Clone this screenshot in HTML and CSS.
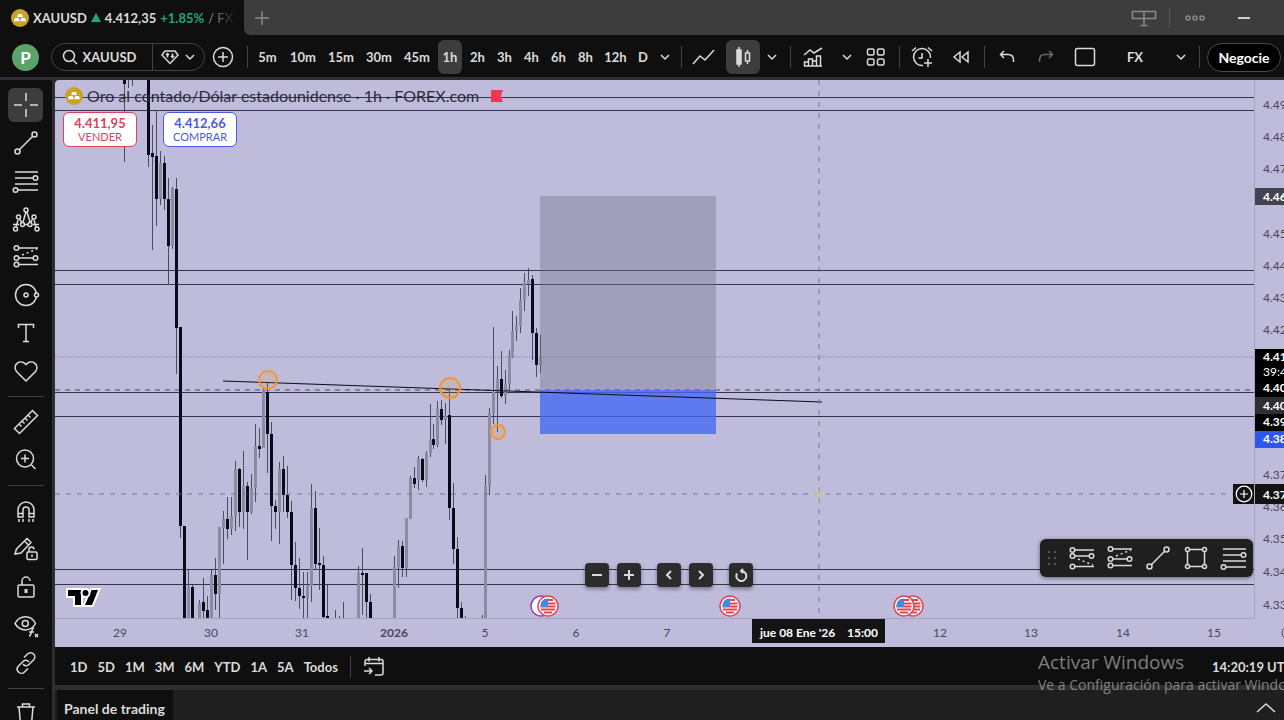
FILE: index.html
```
<!DOCTYPE html>
<html lang="es">
<head>
  <meta charset="UTF-8" />
  <meta name="viewport" content="width=device-width, initial-scale=1.0"/>
  <title>XAUUSD 4.412,35 +1.85% / FX</title>
  <link rel="stylesheet" href="styles.css">
</head>
<body>

<!-- shared icons -->
<svg class="sprite" aria-hidden="true">
  <symbol id="gold" viewBox="0 0 20 20">
    <circle cx="10" cy="10" r="10" fill="#c9a227"/>
    <path d="M8 5.500h4l1.300 3.500H6.700z M4.500 10h4l1.300 3.500H3.200z M11.500 10h4l1.300 3.500h-6.600z" fill="#fff"/>
  </symbol>
  <symbol id="chevron" viewBox="0 0 12 12"><path d="M2 4l4 4 4-4"/></symbol>
  <symbol id="plus-circle" viewBox="0 0 22 22"><circle cx="11" cy="11" r="9.500"/><path d="M11 6v10M6 11h10"/></symbol>
  <symbol id="trend" viewBox="0 0 28 28"><circle cx="5.500" cy="22.500" r="2.500"/><circle cx="22.500" cy="5.500" r="2.500"/><path d="M7.300 20.700L20.700 7.300"/></symbol>
  <symbol id="fib" viewBox="0 0 28 28"><path d="M3 5h23M3 11h18M3 17h23M5.500 23H26"/><circle cx="23.500" cy="11" r="2.300"/><circle cx="3.500" cy="23" r="2.300"/></symbol>
  <symbol id="short" viewBox="0 0 28 28"><circle cx="4.500" cy="5" r="2.300"/><path d="M7 5h19"/><circle cx="4.500" cy="15" r="2.300"/><path d="M7 15h14"/><circle cx="23.500" cy="15" r="2.300"/><circle cx="4.500" cy="21.500" r="2.300"/><path d="M7 21.500h19"/><path d="M10 12l15-6" stroke-dasharray="2 3"/></symbol>
  <symbol id="long" viewBox="0 0 28 28"><circle cx="4.500" cy="6" r="2.300"/><path d="M7 6h19"/><circle cx="4.500" cy="12" r="2.300"/><path d="M7 12h14"/><circle cx="23.500" cy="12" r="2.300"/><circle cx="4.500" cy="22.500" r="2.300"/><path d="M7 22.500h19"/><path d="M10 15l15 6" stroke-dasharray="2 3"/></symbol>
  <symbol id="flag" viewBox="0 0 22 22">
    <circle cx="11" cy="11" r="10" fill="#fff" stroke="#e0455a" stroke-width="1.500"/>
    <path d="M4 8.500h14.500M3.500 11.500h15M4 14.500h14M7 17.500h8M7 5h9" stroke="#e8414f" stroke-width="1.800"/>
    <path d="M11 3.500V12H3.500C3 7 6 3.500 11 3.500z" fill="#3f8be0"/>
  </symbol>
</svg>

<div class="app">

  <header class="tabs">
    <div class="tab">
      <svg class="coin"><use href="#gold"/></svg>
      <b>XAUUSD</b>
      <i class="up"></i>
      <b>4.412,35</b>
      <b class="green">+1.85%</b>
      <span class="fade">/ FX</span>
    </div>
    <div class="tabs-rest">
      <button class="new-tab" aria-label="Nueva pestaña"><svg class="ico" width="16" height="16" viewBox="0 0 16 16"><path d="M8 1v14M1 8h14"/></svg></button>
      <div class="window-buttons">
        <button aria-label="Vincular"><svg class="ico" width="26" height="20" viewBox="0 0 26 20"><path d="M1.500 3.500h23v7h-23zM13 3.500V17M9.500 17.500h7"/></svg></button>
        <span class="sep"></span>
        <button aria-label="Menú"><svg class="ico" width="22" height="8" viewBox="0 0 22 8"><circle cx="4" cy="4" r="2"/><circle cx="11" cy="4" r="2"/><circle cx="18" cy="4" r="2"/></svg></button>
        <button class="minimize" aria-label="Minimizar"><svg class="ico" width="12" height="4" viewBox="0 0 12 4"><path d="M0 2h12"/></svg></button>
      </div>
    </div>
  </header>

  <nav class="toolbar">
    <button class="avatar">P</button>
    <div class="search">
      <button class="symbol">
        <svg class="ico" width="16" height="16" viewBox="0 0 16 16"><circle cx="7" cy="7" r="5.500"/><path d="M11 11l4 4"/></svg>
        XAUUSD
      </button>
      <button class="compare" aria-label="Fuente">
        <svg class="ico" width="18" height="16" viewBox="0 0 18 16"><path d="M4 2h10l3 4-8 8.500L1 6z"/><path d="M6.500 4.500v4M5 6l1.500-1.500L8 6M11.500 4.500v4M10 7l1.500 1.500L13 7"/></svg>
        <svg class="ico chev"><use href="#chevron"/></svg>
      </button>
    </div>
    <button class="tool add" aria-label="Comparar"><svg class="ico" width="22" height="22"><use href="#plus-circle"/></svg></button>
    <span class="sep"></span>
    <div class="intervals">
      <button class="mid">5m</button>
      <button class="wide">10m</button>
      <button class="wide">15m</button>
      <button class="wide">30m</button>
      <button class="wide">45m</button>
      <button class="on">1h</button>
      <button>2h</button>
      <button>3h</button>
      <button>4h</button>
      <button>6h</button>
      <button>8h</button>
      <button class="mid">12h</button>
      <button class="slim">D</button>
      <button class="slim" aria-label="Más intervalos"><svg class="ico chev"><use href="#chevron"/></svg></button>
    </div>
    <span class="sep"></span>
    <button class="tool wide" aria-label="Línea"><svg class="ico" width="24" height="18" viewBox="0 0 24 18"><path d="M1 16l7-8 5 4 9-10"/></svg></button>
    <button class="tool on" aria-label="Velas"><svg class="ico" width="18" height="22" viewBox="0 0 18 22"><path d="M5 1v20M13.500 4v3M13.500 15v3"/><path d="M3 4h4v14H3z" fill="currentColor"/><path d="M11.500 7h4v8h-4z"/></svg></button>
    <button class="tool slim" aria-label="Más tipos"><svg class="ico chev"><use href="#chevron"/></svg></button>
    <span class="sep"></span>
    <button class="tool wide" aria-label="Indicadores"><svg class="ico" width="20" height="20" viewBox="0 0 20 20"><path d="M1 8l6-5 4 3 8-5M1.500 19v-4h4v4M5.500 19v-7h4v7M9.500 19v-5h4v5M13.500 19V9h4v10zM1 19h18"/></svg></button>
    <button class="tool slim" aria-label="Plantillas"><svg class="ico chev"><use href="#chevron"/></svg></button>
    <button class="tool" aria-label="Diseños"><svg class="ico" width="20" height="20" viewBox="0 0 20 20"><rect x="1.500" y="2" width="6.500" height="6" rx="1.500"/><rect x="11.500" y="2" width="6.500" height="6" rx="1.500"/><rect x="1.500" y="12" width="6.500" height="6" rx="1.500"/><rect x="11.500" y="12" width="6.500" height="6" rx="1.500"/></svg></button>
    <span class="sep"></span>
    <button class="tool wide" aria-label="Alerta"><svg class="ico" width="22" height="22" viewBox="0 0 22 22"><path d="M19.500 12A8.500 8.500 0 1 0 12 19.500M11 7v5H7.500M1 5l4-3.500M17 1.500L21 5M17 13v8M13 17h8"/></svg></button>
    <button class="tool" aria-label="Repetición"><svg class="ico" width="18" height="14" viewBox="0 0 18 14"><path d="M8 2v10L2 7zM16 2v10l-6-5z"/></svg></button>
    <span class="sep"></span>
    <button class="tool wide" aria-label="Deshacer"><svg class="ico" width="16" height="14" viewBox="0 0 16 14"><path d="M5 1L1.500 4.500 5 8M1.500 4.500H9c3.500 0 5.500 2 5.500 5.500v2"/></svg></button>
    <button class="tool dim" aria-label="Rehacer"><svg class="ico" width="16" height="14" viewBox="0 0 16 14"><path d="M11 1l3.500 3.500L11 8M14.500 4.500H7C3.500 4.500 1.500 6.500 1.500 10v2"/></svg></button>
    <button class="tool wide" aria-label="Disposición"><svg class="ico" width="22" height="20" viewBox="0 0 22 20"><rect x="1.500" y="1.500" width="19" height="17" rx="2"/></svg></button>
    <button class="layout-name">FX <svg class="ico chev"><use href="#chevron"/></svg></button>
    <span class="sep"></span>
    <button class="trade">Negocie</button>
  </nav>

  <div class="workspace">
    <aside class="drawing">
      <button class="on" aria-label="Cruz"><svg class="ico" viewBox="0 0 28 28"><path d="M14 2v8M14 18v8M2 14h8M18 14h8"/></svg></button>
      <button aria-label="Línea de tendencia"><svg class="ico"><use href="#trend"/></svg></button>
      <button aria-label="Fibonacci"><svg class="ico"><use href="#fib"/></svg></button>
      <button aria-label="Patrones"><svg class="ico" viewBox="0 0 28 28"><path d="M1 19.500h6M12 19.500h4M21 19.500h6M4 22l2-7M7.500 14l2.500 4M11 17l3-10M15 7l3 10M18.500 18l2-4M22 15l2 7"/><circle cx="3.500" cy="24" r="2"/><circle cx="6.500" cy="12" r="2"/><circle cx="10.500" cy="19.500" r="2"/><circle cx="14" cy="5" r="2"/><circle cx="18" cy="19.500" r="2"/><circle cx="22" cy="12" r="2"/><circle cx="25" cy="24" r="2"/></svg></button>
      <button aria-label="Posición"><svg class="ico"><use href="#short"/></svg></button>
      <button aria-label="Formas"><svg class="ico" viewBox="0 0 28 28"><circle cx="14" cy="14" r="10.500"/><circle cx="14" cy="14" r="2"/><circle cx="24.500" cy="14" r="2" fill="#0f0f0f"/></svg></button>
      <button aria-label="Texto"><svg class="ico" viewBox="0 0 28 28"><path d="M6.500 9V5.500h15V9M14 5.500v17M11 22.500h6"/></svg></button>
      <button aria-label="Favoritos"><svg class="ico" viewBox="0 0 28 28"><path d="M14 24L4.500 14.500c-5-6.500 4-13.500 9.500-7 5.500-6.500 14.500.5 9.500 7z"/></svg></button>
      <hr>
      <button aria-label="Regla"><svg class="ico" viewBox="0 0 28 28"><path d="M2.500 20.500L20.500 2.500l5 5-18 18zM7 16l2.500 2.500M10 13l2.500 2.500M13 10l2.500 2.500M16 7l2.500 2.500"/></svg></button>
      <button aria-label="Acercar"><svg class="ico" viewBox="0 0 28 28"><circle cx="13" cy="12.500" r="8.500"/><path d="M19.500 19l4 4M13 8.500v8M9 12.500h8"/></svg></button>
      <hr>
      <button aria-label="Imán"><svg class="ico" viewBox="0 0 28 28"><path d="M6 20v-7a8 8 0 0 1 16 0v7h-5v-7a3 3 0 0 0-6 0v7zM6 16.500h5M17 16.500h5M7 22v3M11 22v3M17 22v3M21 22v3"/></svg></button>
      <button aria-label="Seguir dibujando"><svg class="ico" viewBox="0 0 28 28"><path d="M3 19l1.500-5L15 3.500l4 4L9 18zM12.500 6l4 4M17 17v-2.500a2.500 2.500 0 0 1 5 0"/><rect x="15" y="17" width="10" height="7.500" rx="1"/><path d="M20 19.500v2.500"/></svg></button>
      <button aria-label="Bloquear"><svg class="ico" viewBox="0 0 28 28"><rect x="6" y="12" width="16" height="12" rx="1.500"/><path d="M10 12V8a4 4 0 0 1 8 0"/><path d="M14 16v4" class="heavy"/></svg></button>
      <button aria-label="Ocultar"><svg class="ico" viewBox="0 0 28 28"><path d="M3 12.500C8 3.500 19 3.500 23.500 12.500 19 21 8 21 3 12.500z"/><circle cx="13.300" cy="12.500" r="3"/><path d="M22 17c-3 0-2 8-5 8M17 21h5M23 23l3 3M26 23l-3 3"/></svg></button>
      <button aria-label="Vínculo"><svg class="ico" viewBox="0 0 28 28"><path d="M12 8.500l3.500-3.500c4-4 10 2 6 6L17 15.500c-2 2-4.500 1.500-6-.5M16 19.500L12.500 23c-4 4-10-2-6-6L11 12.500c2-2 4.500-1.500 6 .5"/></svg></button>
      <hr>
      <button aria-label="Eliminar"><svg class="ico" viewBox="0 0 28 28"><path d="M5 7h18M10.500 7V4h7v3M7 7l1.500 17h11L21 7"/></svg></button>
    </aside>

    <main class="main">
      <section class="chart">
        <div class="plot">
          <svg class="canvas" width="100%" height="100%">
            <g class="levels">
              <path d="M0 17h3000M0 30h3000M0 190h3000M0 204h3000M0 312h3000M0 336h3000M0 489h3000M0 504h3000"/>
            </g>
            <line class="last-price" x1="0" y1="277" x2="100%" y2="277"/>
            <line class="alert-line" x1="0" y1="310" x2="100%" y2="310"/>

            <!-- candles -->
            <g class="candles" transform="translate(-55 -80)">
              <path class="wick" d="M124 80V162M128 80V88M132 80V86M148 80V167M152 125V250M156 110V226M160 151V205M164 156V210M168 178V285M172 187V249M176 178V374M180 327V538M188 569V619M192 585V619M199 600V619M203 578V619M207 596V619M211 570V619M215 558V610M219 527V619M223 511V564M227 497V539M231 497V535M235 461V531M239 468V527M243 451V529M247 482V560M251 474V514M255 424V502M259 428V458M263 388V448M267 382V473M271 422V541M275 500V529M279 462V544M283 456V512M287 466V518M291 501V600M295 542V601M299 558V609M303 572V619M307 572V619M311 484V602M315 491V570M319 528V590M323 556V619M327 585V619M335 610V619M339 616V619M343 602V619M358 566V619M362 548V615M366 573V619M370 594V619M394 556V619M398 540V588M402 541V577M406 518V577M410 476V519M414 467V488M418 456V490M422 458V482M426 451V487M430 404V457M433 424V449M437 401V447M441 400V425M445 403V444M449 389V520M453 483V564M457 537V619M461 602V619M465 616V619M482 615V619M485 475V619M489 408V495M493 327V424M497 366V432M501 351V398M505 370V404M509 350V390M512 311V358M516 316V341M520 288V333M524 273V311M528 268V296M532 275V360M536 328V377M540 335V373"/>
              <path class="bull" d="M160 163V199M172 188V246M188 587V619M199 603V619M211 575V619M219 527V594M223 519V528M231 516V529M235 469V516M243 486V512M251 488V512M255 446V488M263 390V448M279 469V512M307 586V597M311 508V586M358 573V619M394 567V619M398 546V567M406 518V568M410 478V519M418 459V480M426 453V480M430 440V453M437 409V445M445 416V420M485 486V619M489 413V486M493 392V413M497 379V392M505 384V396M509 356V384M512 331V357M516 326V331M520 300V326M524 283V300M528 280V284M540 357V365"/>
              <path class="bear" d="M124 80V84M148 80V155M152 153V157M156 156V199M164 163V199M168 199V246M176 189V328M180 327V526M184 526V619M192 587V619M203 602V611M207 610V619M215 575V594M227 519V529M239 469V512M247 486V512M259 446V449M267 392V434M271 434V506M275 506V512M283 469V495M287 495V512M291 512V565M295 565V588M299 588V596M303 596V598M315 508V564M319 563V565M323 565V617M327 616V619M362 573V575M366 573V602M370 602V619M402 546V568M414 478V484M422 459V480M433 439V445M441 409V420M449 415V508M453 508V549M457 549V608M461 608V619M501 379V396M532 279V333M536 333V365"/>
            </g>

            <!-- short position -->
            <rect class="risk" x="485" y="116" width="176" height="194"/>
            <rect class="reward" x="485" y="310" width="176" height="44"/>
            <path class="trend-line" d="M168 301L767 322"/>
            <g class="marks">
              <circle cx="213" cy="300" r="9"/>
              <circle cx="395" cy="308" r="10"/>
              <circle cx="443" cy="352" r="7"/>
            </g>

            <line class="cross" x1="0" y1="414" x2="100%" y2="414"/>
            <line class="cross" x1="764" y1="0" x2="764" y2="100%"/>
            <path class="pointer" d="M763 406v16M755 414h16"/>
          </svg>

          <div class="legend">
            <svg class="coin"><use href="#gold"/></svg>
            <span>Oro al contado/Dólar estadounidense · 1h · FOREX.com</span>
            <svg width="12" height="12" viewBox="0 0 12 12"><path d="M0 0h12l-2 6 2 6H0z" fill="#f23655"/></svg>
          </div>
          <div class="quotes">
            <button class="sell"><b>4.411,95</b>VENDER</button>
            <button class="buy"><b>4.412,66</b>COMPRAR</button>
          </div>

          <svg class="logo" width="38" height="24" viewBox="0 0 38 24"><path d="M3 4h13v15h-6V10H3zM27 19l6-15h-6.500L20 19z"/><circle cx="20.500" cy="7" r="3"/></svg>

          <div class="zoom">
            <button aria-label="Alejar"><svg class="ico" width="14" height="14" viewBox="0 0 14 14"><path d="M2 7h10"/></svg></button>
            <button aria-label="Acercar"><svg class="ico" width="14" height="14" viewBox="0 0 14 14"><path d="M2 7h10M7 2v10"/></svg></button>
            <button class="gap" aria-label="Izquierda"><svg class="ico" width="14" height="14" viewBox="0 0 14 14"><path d="M9 3L5 7l4 4"/></svg></button>
            <button aria-label="Derecha"><svg class="ico" width="14" height="14" viewBox="0 0 14 14"><path d="M5 3l4 4-4 4"/></svg></button>
            <button class="gap" aria-label="Restablecer"><svg class="ico" width="14" height="14" viewBox="0 0 14 14"><path d="M3 5.500A5 5 0 1 0 7 3M9 1L7 3l2 2"/></svg></button>
          </div>

          <svg class="event purple" width="22" height="22" viewBox="0 0 22 22"><circle cx="11" cy="11" r="10" fill="#fff" stroke="#9a3fb5" stroke-width="1.500"/></svg>
          <svg class="event e1"><use href="#flag"/></svg>
          <svg class="event e2"><use href="#flag"/></svg>
          <svg class="event e4"><use href="#flag"/></svg>
          <svg class="event e3"><use href="#flag"/></svg>

          <button class="add-alert" aria-label="Añadir alerta"><svg class="ico" width="18" height="18"><use href="#plus-circle"/></svg></button>

          <div class="favorites">
            <svg class="grip" width="10" height="14" viewBox="0 0 10 14"><path d="M1 1h2M7 1h2M1 7h2M7 7h2M1 13h2M7 13h2"/></svg>
            <button aria-label="Posición larga"><svg class="ico"><use href="#long"/></svg></button>
            <button aria-label="Posición corta"><svg class="ico"><use href="#short"/></svg></button>
            <button aria-label="Línea de tendencia"><svg class="ico"><use href="#trend"/></svg></button>
            <button aria-label="Rectángulo"><svg class="ico" viewBox="0 0 28 28"><path d="M7.500 5.500h13M7.500 22.500h13M5.500 7.500v13M22.500 7.500v13"/><circle cx="5.500" cy="5.500" r="2"/><circle cx="22.500" cy="5.500" r="2"/><circle cx="5.500" cy="22.500" r="2"/><circle cx="22.500" cy="22.500" r="2"/></svg></button>
            <button aria-label="Fibonacci"><svg class="ico"><use href="#fib"/></svg></button>
          </div>
        </div>

        <svg class="price-axis" width="100%" height="100%">
          <g class="ticks">
            <text x="8" y="29">4.49</text>
            <text x="8" y="61">4.48</text>
            <text x="8" y="93">4.47</text>
            <text x="8" y="158">4.45</text>
            <text x="8" y="190">4.44</text>
            <text x="8" y="222">4.43</text>
            <text x="8" y="254">4.42</text>
            <text x="8" y="399">4.37</text>
            <text x="8" y="431">4.36</text>
            <text x="8" y="463">4.35</text>
            <text x="8" y="496">4.34</text>
            <text x="8" y="529">4.33</text>
          </g>
          <rect y="108" width="100%" height="17" fill="#434350"/>
          <rect y="269" width="100%" height="48" fill="#000"/>
          <rect y="317" width="100%" height="17" fill="#2f2f33"/>
          <rect y="334" width="100%" height="17" fill="#000"/>
          <rect y="351" width="100%" height="17" fill="#2f57f0"/>
          <rect y="404" width="100%" height="20" fill="#131313"/>
          <g class="tags">
            <text x="8" y="121">4.46</text>
            <text x="8" y="281">4.41</text>
            <text x="8" y="296" class="countdown">39:4</text>
            <text x="8" y="312">4.40</text>
            <text x="8" y="330">4.40</text>
            <text x="8" y="346">4.39</text>
            <text x="8" y="363">4.38</text>
            <text x="8" y="419">4.37</text>
          </g>
        </svg>

        <svg class="time-axis" width="100%" height="100%">
          <g class="ticks">
            <text x="65" y="18">29</text>
            <text x="156" y="18">30</text>
            <text x="247" y="18">31</text>
            <text x="339" y="18" class="year">2026</text>
            <text x="430" y="18">5</text>
            <text x="521" y="18">6</text>
            <text x="612" y="18">7</text>
            <text x="885" y="18">12</text>
            <text x="976" y="18">13</text>
            <text x="1068" y="18">14</text>
            <text x="1159" y="18">15</text>
          </g>
          <rect x="697" y="0" width="133" height="24" fill="#131313"/>
          <g class="tags">
            <text x="705" y="18">jue 08 Ene '26</text>
            <text x="792" y="18">15:00</text>
          </g>
        </svg>
        <svg class="axis-settings" width="100%" height="100%"><circle cx="33" cy="14" r="6"/></svg>
      </section>

      <div class="ranges">
        <button>1D</button>
        <button>5D</button>
        <button>1M</button>
        <button>3M</button>
        <button>6M</button>
        <button>YTD</button>
        <button>1A</button>
        <button>5A</button>
        <button>Todos</button>
        <span class="sep"></span>
        <button aria-label="Ir a"><svg class="ico" width="22" height="22" viewBox="0 0 22 22"><path d="M2 10V5.500a2 2 0 0 1 2-2h14a2 2 0 0 1 2 2V17a2 2 0 0 1-2 2h-6M2 7.500h18M6 1v4.500M16 1v4.500M1 15h8M6 12l3 3-3 3"/></svg></button>
        <button class="clock">14:20:19 UTC</button>
      </div>

      <footer class="panel">
        <button class="panel-tab">Panel de trading</button>
        <button class="expand" aria-label="Abrir panel"><svg class="ico" width="20" height="12" viewBox="0 0 20 12"><path d="M1 10l9-8 9 8"/></svg></button>
      </footer>
    </main>
  </div>
</div>

<div class="watermark">
  <p class="big">Activar Windows</p>
  <p>Ve a Configuración para activar Windows.</p>
</div>

</body>
</html>
```
FILE: styles.css
```
* {
  box-sizing: border-box;
}
body {
  margin: 0;
  background: #0f0f0f;
  color: #dbdbdb;
  font-family: Lato, sans-serif;
  font-size: 13px;
  overflow: hidden;
}
button {
  display: flex;
  align-items: center;
  justify-content: center;
  flex: none;
  padding: 0;
  border: 0;
  background: none;
  color: inherit;
  font: inherit;
  font-weight: bold;
  white-space: nowrap;
}
svg {
  display: block;
  flex: none;
}
.sprite {
  position: absolute;
  width: 0;
  height: 0;
}
.ico {
  fill: none;
  stroke: currentColor;
  stroke-width: 1.5;
}
.chev {
  width: 12px;
  height: 12px;
}
.coin {
  width: 18px;
  height: 18px;
}
.sep {
  flex: none;
  width: 1px;
  height: 22px;
  background: #434343;
}
.app {
  display: flex;
  flex-direction: column;
  height: 100vh;
}

/* tabs */
.tabs {
  display: flex;
  flex: none;
  height: 35px;
}
.tab {
  display: flex;
  align-items: center;
  flex: none;
  gap: 4px;
  width: 244px;
  padding-left: 11px;
  white-space: nowrap;
}
.up {
  border: 5px solid transparent;
  border-top: 0;
  border-bottom: 9px solid #1fa67a;
}
.green {
  color: #1fa67a;
}
.fade {
  background: linear-gradient(90deg, #aaa, #222);
  background-clip: text;
  color: transparent;
}
.tabs-rest {
  display: flex;
  flex: 1;
  align-items: center;
  justify-content: space-between;
  padding: 0 34px 0 10px;
  background: #3d3d3d;
  border-bottom-left-radius: 6px;
  color: #8a8a8a;
}
.window-buttons {
  display: flex;
  align-items: center;
  gap: 14px;
}
.window-buttons .sep {
  height: 20px;
  margin-left: -2px;
  background: #555;
}
.minimize {
  margin-left: 18px;
  color: #fff;
}

/* toolbar */
.toolbar {
  display: flex;
  align-items: center;
  flex: none;
  height: 45px;
  padding: 2px 3px 0 12px;
  border-bottom: 3px solid #2e2e33;
}
.avatar {
  width: 27px;
  height: 27px;
  border-radius: 50%;
  background: #5aa469;
  color: #fff;
  font-size: 17px;
}
.search {
  display: flex;
  flex: none;
  width: 154px;
  height: 28px;
  margin-left: 12px;
  border: 1px solid #434343;
  border-radius: 14px;
}
.symbol {
  width: 101px;
  gap: 5px;
  padding-right: 6px;
  border-right: 1px solid #434343;
}
.compare {
  flex: 1;
  gap: 5px;
}
.tool {
  width: 34px;
  height: 34px;
  border-radius: 6px;
}
.tool.wide {
  width: 44px;
}
.tool.slim {
  width: 24px;
}
.tool.add {
  width: 36px;
}
.tool.dim {
  color: #6a6a6a;
}
.tool + .sep {
  margin-left: 6px;
}
.intervals {
  display: flex;
  padding: 0 5px 0 3px;
}
.intervals button {
  width: 27px;
  height: 34px;
  border-radius: 6px;
}
.intervals .wide {
  width: 38px;
}
.intervals .mid {
  width: 33px;
}
.intervals .slim {
  width: 22px;
}
.intervals .on {
  width: 24px;
  margin: 0 2px;
}
.on {
  background: #3d3d3d;
}
.layout-name {
  flex: 1;
  justify-content: space-between;
  padding: 0 12px 0 20px;
}
.trade {
  width: 74px;
  height: 29px;
  margin-left: 7px;
  border: 1px solid #4a4a4a;
  border-radius: 15px;
  background: #000;
  color: #fff;
  font-size: 14px;
}

/* drawing tools */
.workspace {
  display: flex;
  flex: 1;
  min-height: 0;
}
.drawing {
  flex: none;
  width: 52px;
  padding: 8px;
  overflow: hidden;
}
.drawing button {
  width: 35px;
  height: 34px;
  margin-bottom: 4px;
  border-radius: 6px;
}
.drawing .ico,
.favorites .ico {
  width: 28px;
  height: 28px;
}
.drawing .heavy {
  stroke-width: 3;
}
.drawing hr {
  height: 1px;
  margin: 8px 0;
  border: 0;
  background: #434343;
}
.main {
  display: flex;
  flex: 1;
  flex-direction: column;
  min-width: 0;
  border-left: 3px solid #2e2e2e;
}

/* chart */
.chart {
  display: grid;
  flex: 1;
  grid-template-columns: 1fr 29px;
  grid-template-rows: 1fr 28px;
  min-height: 0;
  overflow: hidden;
  background: #bfbbdb;
  border-top-left-radius: 4px;
}
.plot {
  position: relative;
  min-height: 0;
  overflow: hidden;
  border-right: 1px solid #a6a2c0;
  border-bottom: 1px solid #a6a2c0;
}
.canvas {
  position: absolute;
}
.levels {
  stroke: #35334d;
  shape-rendering: crispEdges;
}
.candles {
  fill: none;
  shape-rendering: crispEdges;
}
.wick {
  stroke: #4d4a61;
}
.bull {
  stroke: #8d8aa3;
  stroke-width: 3;
}
.bear {
  stroke: #0b0a18;
  stroke-width: 3;
}
.last-price {
  stroke: #85819e;
  stroke-dasharray: 1 1;
}
.alert-line {
  stroke: #4d4a68;
  stroke-dasharray: 5 5;
}
.risk {
  fill: rgba(120, 120, 140, 0.42);
}
.reward {
  fill: rgba(65, 105, 245, 0.78);
}
.trend-line {
  stroke: #0b0a18;
}
.marks {
  fill: rgba(245, 150, 30, 0.15);
  stroke: #f0982b;
  stroke-width: 2;
}
.cross {
  stroke: #7672ad;
  stroke-dasharray: 5 6;
}
.pointer {
  stroke: #d2cf7a;
  stroke-width: 1;
}
.legend {
  position: absolute;
  top: 6px;
  left: 10px;
  display: flex;
  align-items: center;
  gap: 4px;
  color: #2d2b3d;
  font-size: 16px;
  white-space: nowrap;
}
.legend svg:last-child {
  margin-left: 8px;
}
.quotes {
  position: absolute;
  top: 32px;
  left: 8px;
  display: flex;
  gap: 26px;
}
.quotes button {
  flex-direction: column;
  width: 74px;
  height: 35px;
  border: 1px solid;
  border-radius: 6px;
  background: #fff;
  font-size: 11px;
  font-weight: normal;
  line-height: 14px;
}
.quotes b {
  font-size: 13px;
}
.sell {
  color: #d9435c;
}
.buy {
  color: #4a5be0;
}
.logo {
  position: absolute;
  bottom: 8px;
  left: 10px;
  fill: #000;
  stroke: #fff;
  stroke-width: 4;
  paint-order: stroke;
}
.zoom {
  position: absolute;
  bottom: 31px;
  left: 530px;
  display: flex;
  gap: 8px;
}
.zoom button {
  width: 24px;
  height: 24px;
  border-radius: 4px;
  background: #2b2b2e;
  box-shadow: 0 2px 4px rgba(0, 0, 0, 0.4);
}
.zoom .gap {
  margin-left: 8px;
}
.zoom .ico {
  stroke-width: 2;
}
.event {
  position: absolute;
  bottom: 1px;
  width: 22px;
  height: 22px;
}
.purple {
  left: 475px;
}
.e1 {
  left: 482px;
}
.e2 {
  left: 664px;
}
.e3 {
  left: 838px;
}
.e4 {
  left: 847px;
}
.add-alert {
  position: absolute;
  top: 404px;
  right: 0;
  width: 21px;
  height: 20px;
  background: #131313;
  color: #fff;
}
.favorites {
  position: absolute;
  right: 1px;
  bottom: 41px;
  display: flex;
  align-items: center;
  height: 38px;
  padding-left: 7px;
  border-radius: 6px;
  background: #1f1f1f;
  box-shadow: 0 1px 4px rgba(0, 0, 0, 0.5);
}
.favorites button {
  width: 38px;
  height: 38px;
}
.favorites .grip {
  margin-right: 6px;
  stroke: #555;
  stroke-width: 2;
}
.ticks {
  fill: #4a475c;
  font-size: 12px;
}
.tags {
  fill: #fff;
  font-size: 12px;
  font-weight: bold;
}
.countdown {
  font-weight: normal;
}
.time-axis .ticks {
  text-anchor: middle;
}
.time-axis .year {
  font-weight: bold;
}
.price-axis,
.time-axis {
  min-width: 0;
  min-height: 0;
}
.axis-settings {
  fill: none;
  stroke: #4a475c;
}

/* bottom */
.ranges {
  display: flex;
  align-items: center;
  flex: none;
  gap: 10px;
  height: 38px;
  padding: 2px 0 0 15px;
}
.ranges .sep {
  margin: 0 2px;
}
.ranges .clock {
  justify-content: flex-start;
  width: 72px;
  margin-left: auto;
  overflow: hidden;
}
.panel {
  display: flex;
  flex: none;
  justify-content: space-between;
  height: 35px;
  padding: 0 8px 0 2px;
  border-top: 5px solid #2e2e2e;
  background: #1f1f1f;
}
.panel-tab {
  padding: 6px 8px 0 7px;
  background: #0f0f0f;
  font-size: 14px;
}
.expand {
  padding-top: 6px;
}
.watermark {
  position: absolute;
  right: 0;
  bottom: 25px;
  width: 246px;
  overflow: hidden;
  color: rgba(165, 165, 165, 0.75);
  font-family: "Open Sans", sans-serif;
  font-size: 14px;
  line-height: 20px;
  white-space: nowrap;
  pointer-events: none;
}
.watermark p {
  margin: 0;
}
.watermark .big {
  font-size: 19px;
  line-height: 26px;
}
```
